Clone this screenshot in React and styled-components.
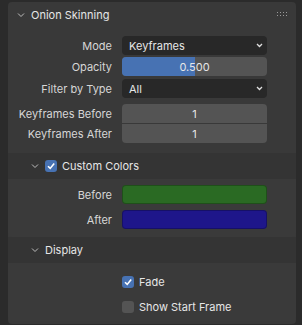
import styled, { createGlobalStyle } from "styled-components";

const Global = createGlobalStyle`
  html, body {
    margin: 0;
    padding: 0;
    background: #2b2b2b;
  }
  body {
    font-family: Inter, "DejaVu Sans", sans-serif;
    font-size: 11px;
    color: #dcdcdc;
  }
`;

const Page = styled.div`
  width: 302px;
  height: 325px;
  padding: 2px 6px 0 8px;
  box-sizing: border-box;
  overflow: hidden;
`;

const Panel = styled.div`
  width: 288px;
  background: #393939;
  border-radius: 4px;
  padding-bottom: 3px;
`;

const Header = styled.div`
  height: 26px;
  display: flex;
  align-items: center;
  padding-left: ${(p) => p.$indent || 9}px;
  padding-right: 9px;
  background: ${(p) => (p.$sub ? "#343434" : "transparent")};
  color: #e6e6e6;
  gap: 6px;
`;

const Title = styled.span`
  flex: 1;
`;

const Body = styled.div`
  display: flex;
  flex-direction: column;
  padding: ${(p) => p.$pad || "8px 0 8px 0"};
`;

const Row = styled.div`
  display: flex;
  align-items: center;
  height: ${(p) => p.$h || 19}px;
  margin-top: ${(p) => p.$mt || 0}px;
`;

const Label = styled.div`
  width: 114px;
  padding-right: 10px;
  box-sizing: border-box;
  text-align: right;
  color: #d6d6d6;
  white-space: nowrap;
  flex-shrink: 0;
`;

const Field = styled.div`
  width: 145px;
  height: 100%;
  border-radius: 4px;
  box-sizing: border-box;
  display: flex;
  align-items: center;
  position: relative;
  overflow: hidden;
`;

const Dropdown = styled(Field)`
  background: #282828;
  padding: 0 4px 0 7px;
  color: #e6e6e6;
  justify-content: space-between;
`;

const Number = styled(Field)`
  background: #545454;
  justify-content: center;
  color: #e6e6e6;
  border-radius: ${(p) => p.$radius || "4px"};
`;

const Fill = styled.div`
  position: absolute;
  left: 0;
  top: 0;
  bottom: 0;
  background: #4772b3;
`;

const Value = styled.span`
  position: relative;
`;

const Swatch = styled(Field)`
  background: ${(p) => p.$color};
  box-shadow: inset 0 0 0 1px rgba(0, 0, 0, 0.25);
`;

const Box = styled.div`
  width: 12px;
  height: 12px;
  border-radius: 3px;
  background: ${(p) => (p.$on ? "#4772b3" : "#545454")};
  display: flex;
  align-items: center;
  justify-content: center;
  flex-shrink: 0;
`;

const Check = styled.label`
  display: flex;
  align-items: center;
  gap: 5px;
  color: #e6e6e6;
  margin-left: ${(p) => p.$ml || 0}px;
`;

const Sub = styled.div`
  margin-top: ${(p) => p.$mt || 0}px;
`;

const SubBody = styled.div`
  background: #3a3a3a;
  border-radius: 0 0 4px 4px;
`;

const Chevron = ({ size = 8 }) => (
  <svg width={size} height={size} viewBox="0 0 8 8">
    <path d="M1 2.5 L4 5.5 L7 2.5" fill="none" stroke="#bdbdbd" strokeWidth="1" />
  </svg>
);

const SmallChevron = () => (
  <svg width="7" height="5" viewBox="0 0 7 5">
    <path d="M1 1 L3.5 3.5 L6 1" fill="none" stroke="#e0e0e0" strokeWidth="1.3" />
  </svg>
);

const Tick = () => (
  <svg width="10" height="10" viewBox="0 0 10 10">
    <path d="M2 5.2 L4.2 7.4 L8.2 2.4" fill="none" stroke="#ffffff" strokeWidth="1.6" />
  </svg>
);

const Grip = () => (
  <svg width="10" height="6" viewBox="0 0 10 6">
    {[0, 1, 2, 3].map((i) =>
      [0, 1].map((j) => (
        <rect key={`${i}-${j}`} x={i * 3} y={j * 3} width="1" height="1" fill="#9a9a9a" />
      ))
    )}
  </svg>
);

export default function App() {
  return (
    <>
      <Global />
      <Page>
        <Panel>
          <Header>
            <Chevron />
            <Title>Onion Skinning</Title>
            <Grip />
          </Header>
          <Body $pad="8px 0 2px 0">
            <Row>
              <Label>Mode</Label>
              <Dropdown>
                <span>Keyframes</span>
                <SmallChevron />
              </Dropdown>
            </Row>
            <Row $mt={2}>
              <Label>Opacity</Label>
              <Number>
                <Fill style={{ width: `${0.5 * 100}%` }} />
                <Value>0.500</Value>
              </Number>
            </Row>
            <Row $mt={3}>
              <Label>Filter by Type</Label>
              <Dropdown>
                <span>All</span>
                <SmallChevron />
              </Dropdown>
            </Row>
            <Row $mt={6}>
              <Label>Keyframes Before</Label>
              <Number $radius="4px 4px 0 0">1</Number>
            </Row>
            <Row $mt={1}>
              <Label>Keyframes After</Label>
              <Number $radius="0 0 4px 4px">1</Number>
            </Row>
          </Body>
          <Sub $mt={8}>
            <Header $sub $indent={23}>
              <Chevron />
              <Check>
                <Box $on>
                  <Tick />
                </Box>
                Custom Colors
              </Check>
            </Header>
            <SubBody>
              <Body $pad="6px 0 8px 0">
                <Row>
                  <Label>Before</Label>
                  <Swatch $color="#2a6a23" />
                </Row>
                <Row $mt={6}>
                  <Label>After</Label>
                  <Swatch $color="#1e168a" />
                </Row>
              </Body>
            </SubBody>
          </Sub>
          <Sub>
            <Header $sub $indent={23}>
              <Chevron />
              <Title>Display</Title>
            </Header>
            <SubBody>
              <Body $pad="12px 0 8px 0">
                <Row $h={13}>
                  <Check $ml={114}>
                    <Box $on>
                      <Tick />
                    </Box>
                    Fade
                  </Check>
                </Row>
                <Row $h={13} $mt={12}>
                  <Check $ml={114}>
                    <Box />
                    Show Start Frame
                  </Check>
                </Row>
              </Body>
            </SubBody>
          </Sub>
        </Panel>
      </Page>
    </>
  );
}
